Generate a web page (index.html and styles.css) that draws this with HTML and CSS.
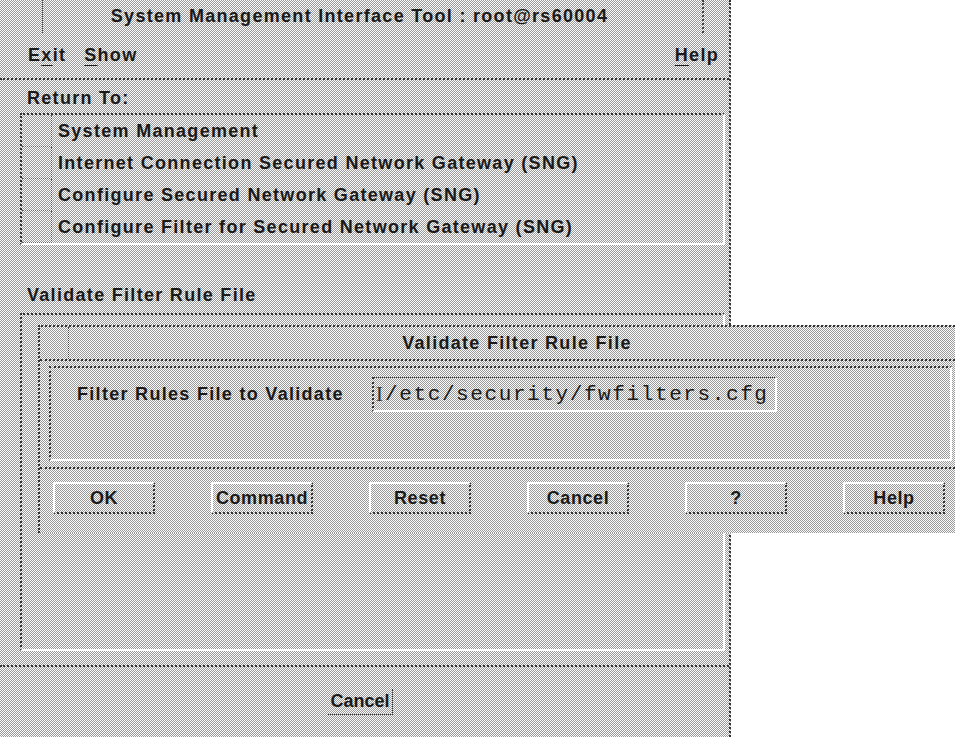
FILE: index.html
```html
<!DOCTYPE html>
<html lang="en">
<head>
<meta charset="utf-8">
<title>System Management Interface Tool</title>
<link rel="stylesheet" href="styles.css">
</head>
<body>
<div class="window">
  <div class="titlebar">
    <div class="tb-box tb-left"></div>
    <div class="tb-title">System Management Interface Tool : root@rs60004</div>
    <div class="tb-box tb-right"></div>
  </div>
  <div class="menubar">
    <span class="menu">E<u>x</u>it</span>
    <span class="menu"><u>S</u>how</span>
    <span class="menu-spacer"></span>
    <span class="menu"><u>H</u>elp</span>
  </div>
  <div class="content">
    <div class="label return-label">Return To:</div>
    <div class="list">
      <div class="item"><span class="item-box"></span><span class="item-text">System Management</span></div>
      <div class="item"><span class="item-box"></span><span class="item-text">Internet Connection Secured Network Gateway (SNG)</span></div>
      <div class="item"><span class="item-box"></span><span class="item-text">Configure Secured Network Gateway (SNG)</span></div>
      <div class="item"><span class="item-box"></span><span class="item-text">Configure Filter for Secured Network Gateway (SNG)</span></div>
    </div>
    <div class="label work-label">Validate Filter Rule File</div>
    <div class="work"></div>
  </div>
  <div class="footer">
    <span class="footer-btn">Cancel</span>
  </div>
</div>

<div class="dialog">
  <div class="dlg-titlebar">
    <div class="dlg-box"></div>
    <div class="dlg-title">Validate Filter Rule File</div>
  </div>
  <div class="dlg-panel">
    <span class="field-label">Filter Rules File to Validate</span>
    <span class="field"><span class="cursor">I</span>/etc/security/fwfilters.cfg</span>
  </div>
  <div class="dlg-buttons">
    <span class="btn">OK</span>
    <span class="btn">Command</span>
    <span class="btn">Reset</span>
    <span class="btn">Cancel</span>
    <span class="btn">?</span>
    <span class="btn">Help</span>
  </div>
</div>
</body>
</html>
```

FILE: styles.css
```css
/* Motif-style desktop: dithered grey surfaces on a white screen */
html, body {
  margin: 0;
  padding: 0;
  background: #ffffff;
}

body {
  width: 955px;
  height: 737px;
  overflow: hidden;
  position: relative;
  font-family: "Liberation Sans", Arial, sans-serif;
  font-size: 18px;
  font-weight: bold;
  letter-spacing: 1.3px;
  color: #1a1a1a;
}

/* 50% ordered-dither grey */
.window,
.dialog {
  background: repeating-conic-gradient(#9a9a9a 0 25%, #fbfbfb 0 50%) 0 0 / 2px 2px;
}

.window {
  width: 731px;
  height: 737px;
  box-sizing: border-box;
  border-right: 2px dotted #333;
  display: flex;
  flex-direction: column;
}

/* ---- title bar ---- */
.titlebar {
  height: 33px;
  display: flex;
  align-items: stretch;
  flex: none;
}
.tb-box {
  flex: none;
}
.tb-left {
  width: 42px;
  border-right: 1px dotted #444;
}
.tb-right {
  width: 25px;
  border-left: 2px dotted #444;
}
.tb-title {
  flex: 1;
  display: flex;
  align-items: center;
  justify-content: center;
  padding-right: 26px;
}

/* ---- menu bar ---- */
.menubar {
  height: 45px;
  flex: none;
  display: flex;
  align-items: center;
  padding: 0 10px 0 28px;
  border-bottom: 2px dotted #333;
  gap: 18px;
}
.menu u {
  text-decoration-thickness: 1px;
  text-underline-offset: 4px;
}
.menu-spacer {
  flex: 1;
}

/* ---- body ---- */
.content {
  flex: 1;
  display: flex;
  flex-direction: column;
  padding: 0 4px 0 20px;
}
.label {
  height: 22px;
  line-height: 22px;
  margin-left: 7px;
}
.return-label {
  margin-top: 7px;
}

.list {
  margin-top: 4px;
  height: 132px;
  box-sizing: border-box;
  border-top: 2px dotted #333;
  border-left: 2px dotted #333;
  border-bottom: 2px solid #fff;
  border-right: 2px solid #fff;
}
.item {
  height: 32px;
  display: flex;
  align-items: center;
}
.item-box {
  width: 30px;
  height: 100%;
  box-sizing: border-box;
  border-right: 1px dotted #555;
  border-bottom: 1px dotted #666;
  margin-right: 6px;
  flex: none;
}

.work-label {
  margin-top: 39px;
}
.work {
  margin-top: 7px;
  height: 338px;
  box-sizing: border-box;
  border-top: 2px dotted #333;
  border-left: 2px dotted #333;
  border-bottom: 2px solid #fff;
  border-right: 2px solid #fff;
}

.footer {
  height: 70px;
  flex: none;
  border-top: 2px dotted #333;
  display: flex;
  align-items: center;
  justify-content: center;
}
.footer-btn {
  padding: 2px 2px 2px 2px;
  margin-left: -8px;
  border-right: 1px dotted #333;
  border-bottom: 1px dotted #333;
  letter-spacing: 0;
}

/* ---- overlaid dialog window ---- */
.dialog {
  position: absolute;
  left: 38px;
  top: 325px;
  width: 917px;
  height: 208px;
  box-sizing: border-box;
  border-top: 2px dotted #333;
  border-left: 2px dotted #333;
  display: flex;
  flex-direction: column;
}
.dlg-titlebar {
  height: 32px;
  display: flex;
  border-bottom: 2px dotted #333;
  flex: none;
}
.dlg-box {
  width: 28px;
  border-right: 1px dotted #444;
  flex: none;
}
.dlg-title {
  flex: 1;
  display: flex;
  align-items: center;
  justify-content: center;
  padding-left: 10px;
}

.dlg-panel {
  margin: 5px 3px 0 9px;
  height: 95px;
  box-sizing: border-box;
  border-top: 2px dotted #333;
  border-left: 2px dotted #333;
  border-bottom: 2px solid #fff;
  border-right: 2px solid #fff;
  display: flex;
  align-items: flex-start;
  padding: 9px 0 0 26px;
}
.field-label {
  margin-top: 7px;
  margin-right: 28px;
}
.field {
  display: inline-flex;
  align-items: center;
  width: 405px;
  height: 35px;
  box-sizing: border-box;
  padding-left: 2px;
  border-top: 1px dotted #333;
  border-left: 2px dotted #333;
  border-bottom: 2px solid #fff;
  border-right: 2px solid #fff;
  font-family: "Liberation Mono", "Courier New", monospace;
  font-weight: normal;
  font-size: 21px;
  letter-spacing: 1.6px;
}
.cursor {
  font-family: "Liberation Serif", serif;
  font-weight: normal;
  font-size: 22px;
  letter-spacing: 0;
  margin-right: 2px;
  color: #333;
}

.dlg-buttons {
  margin-top: 6px;
  border-top: 2px dotted #333;
  flex: 1;
  display: flex;
  align-items: center;
  padding: 0 0 6px 13px;
  gap: 56px;
}
.btn {
  width: 102px;
  height: 32px;
  box-sizing: border-box;
  display: flex;
  align-items: center;
  justify-content: center;
  border-top: 2px solid #fff;
  border-left: 2px solid #fff;
  border-bottom: 2px dotted #333;
  border-right: 2px dotted #333;
  letter-spacing: 0.6px;
}
```
